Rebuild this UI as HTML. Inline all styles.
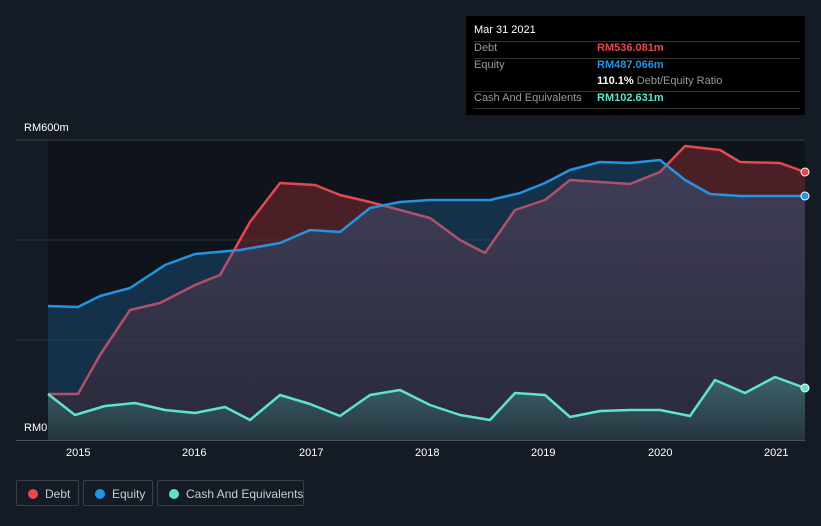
<!DOCTYPE html><html><head><style>
body{margin:0;background:#151b25;width:821px;height:526px;overflow:hidden;font-family:"Liberation Sans",sans-serif;position:relative}
.t{position:absolute;color:#fff;font-size:11px}
.tip{position:absolute;left:466px;top:16px;width:339px;height:99px;background:#000;}
.tip div{position:absolute;font-size:11px;white-space:nowrap}
.ln{position:absolute;left:8px;width:326px;height:1px;background:#333}
.leg{position:absolute;top:480px;height:26px;border:1px solid #3a3f4a;border-radius:2px;color:#c8ccd2;font-size:12px;line-height:26px;box-sizing:border-box;white-space:nowrap}
.leg i{position:absolute;left:11px;top:8px;width:10px;height:10px;border-radius:50%}
</style></head><body>
<svg width="821" height="526" style="position:absolute;left:0;top:0">
<defs>
<clipPath id="aboveDebt"><path d="M48,0 L48,394 L78,394 L100,355 L130,310 L160,303 L195,285 L220,275 L250,222 L280,183 L315,185 L340,195 L370,202 L400,210 L430,218 L460,240 L485,253 L515,210 L545,200 L570,180 L600,182 L630,184 L660,172 L685,146 L720,150 L740,162 L780,163 L805,172 L805,0Z"/></clipPath>
<clipPath id="aboveEq"><path d="M40,0 L48,306 L78,307 L100,296 L130,288 L165,265 L195,254 L240,250 L280,243 L310,230 L340,232 L370,208 L400,202 L430,200 L490,200 L520,193 L545,183 L570,170 L600,162 L630,163 L660,160 L685,180 L710,194 L740,196 L810,196 L810,0Z"/></clipPath>
<clipPath id="belowEq"><path d="M40,440 L40,306 L48,306 L78,307 L100,296 L130,288 L165,265 L195,254 L240,250 L280,243 L310,230 L340,232 L370,208 L400,202 L430,200 L490,200 L520,193 L545,183 L570,170 L600,162 L630,163 L660,160 L685,180 L710,194 L740,196 L810,196 L810,440Z"/></clipPath>
<linearGradient id="cg" x1="0" y1="0" x2="0" y2="1"><stop offset="0" stop-color="#3c6468"/><stop offset="1" stop-color="#263540"/></linearGradient>
<linearGradient id="gg" x1="0" y1="0" x2="0" y2="1"><stop offset="0" stop-color="#403f58"/><stop offset="1" stop-color="#2a2a3c"/></linearGradient>
</defs>
<rect x="16" y="140" width="789" height="300" fill="#0f131b"/>
<rect x="16" y="140" width="32" height="300" fill="#151b25"/>
<path clip-path="url(#aboveDebt)" fill="#15314a" d="M48,440 L48,306 L78,307 L100,296 L130,288 L165,265 L195,254 L240,250 L280,243 L310,230 L340,232 L370,208 L400,202 L430,200 L490,200 L520,193 L545,183 L570,170 L600,162 L630,163 L660,160 L685,180 L710,194 L740,196 L805,196 L805,440Z"/>
<path clip-path="url(#aboveEq)" fill="#4a1f26" d="M48,440 L48,394 L78,394 L100,355 L130,310 L160,303 L195,285 L220,275 L250,222 L280,183 L315,185 L340,195 L370,202 L400,210 L430,218 L460,240 L485,253 L515,210 L545,200 L570,180 L600,182 L630,184 L660,172 L685,146 L720,150 L740,162 L780,163 L805,172 L805,440Z"/>
<path clip-path="url(#belowEq)" fill="url(#gg)" d="M48,440 L48,394 L78,394 L100,355 L130,310 L160,303 L195,285 L220,275 L250,222 L280,183 L315,185 L340,195 L370,202 L400,210 L430,218 L460,240 L485,253 L515,210 L545,200 L570,180 L600,182 L630,184 L660,172 L685,146 L720,150 L740,162 L780,163 L805,172 L805,440Z"/>
<line x1="16" y1="140" x2="805" y2="140" stroke="#3a3f4a"/>
<line x1="16" y1="240" x2="805" y2="240" stroke="#3a3f4a" opacity=".7"/>
<line x1="16" y1="340" x2="805" y2="340" stroke="#3a3f4a" opacity=".7"/>
<path clip-path="url(#aboveEq)" fill="none" stroke="#e5484d" stroke-width="2.5" stroke-linejoin="round" d="M48,394 L78,394 L100,355 L130,310 L160,303 L195,285 L220,275 L250,222 L280,183 L315,185 L340,195 L370,202 L400,210 L430,218 L460,240 L485,253 L515,210 L545,200 L570,180 L600,182 L630,184 L660,172 L685,146 L720,150 L740,162 L780,163 L805,172"/>
<path clip-path="url(#belowEq)" fill="none" stroke="#b0506a" stroke-width="2.5" stroke-linejoin="round" d="M48,394 L78,394 L100,355 L130,310 L160,303 L195,285 L220,275 L250,222 L280,183 L315,185 L340,195 L370,202 L400,210 L430,218 L460,240 L485,253 L515,210 L545,200 L570,180 L600,182 L630,184 L660,172 L685,146 L720,150 L740,162 L780,163 L805,172"/>
<path fill="none" stroke="#2394e0" stroke-width="2.5" stroke-linejoin="round" d="M48,306 L78,307 L100,296 L130,288 L165,265 L195,254 L240,250 L280,243 L310,230 L340,232 L370,208 L400,202 L430,200 L490,200 L520,193 L545,183 L570,170 L600,162 L630,163 L660,160 L685,180 L710,194 L740,196 L805,196"/>
<path fill="url(#cg)" d="M48,440 L48,394 L75,415 L105,406 L135,403 L165,410 L195,413 L225,407 L250,420 L280,395 L310,404 L340,416 L370,395 L400,390 L430,405 L460,415 L490,420 L515,393 L545,395 L570,417 L600,411 L630,410 L660,410 L690,416 L715,380 L745,393 L775,377 L805,388 L805,440Z"/>
<path fill="none" stroke="#5ee3cf" stroke-width="2.5" stroke-linejoin="round" d="M48,394 L75,415 L105,406 L135,403 L165,410 L195,413 L225,407 L250,420 L280,395 L310,404 L340,416 L370,395 L400,390 L430,405 L460,415 L490,420 L515,393 L545,395 L570,417 L600,411 L630,410 L660,410 L690,416 L715,380 L745,393 L775,377 L805,388"/>
<circle cx="805" cy="172" r="4" fill="#e5484d" stroke="#fff"/>
<circle cx="805" cy="196" r="4" fill="#2394e0" stroke="#fff"/>
<circle cx="805" cy="388" r="4" fill="#5ee3cf" stroke="#fff"/>
<line x1="16" y1="440.5" x2="805" y2="440.5" stroke="#4a4f5a"/>
</svg>
<div class="t" style="left:24px;top:122px">RM600m</div>
<div class="t" style="left:24px;top:422px">RM0</div>
<div class="t" style="left:66px;top:447px">2015</div>
<div class="t" style="left:182px;top:447px">2016</div>
<div class="t" style="left:299px;top:447px">2017</div>
<div class="t" style="left:415px;top:447px">2018</div>
<div class="t" style="left:531px;top:447px">2019</div>
<div class="t" style="left:648px;top:447px">2020</div>
<div class="t" style="left:764px;top:447px">2021</div>
<div class="tip">
<div style="left:8px;top:8px;color:#fff">Mar 31 2021</div>
<div class="ln" style="top:25px"></div>
<div style="left:8px;top:26px;color:#999">Debt</div><div style="left:131px;top:26px;color:#e5484d;font-weight:bold">RM536.081m</div>
<div class="ln" style="top:42px"></div>
<div style="left:8px;top:43px;color:#999">Equity</div><div style="left:131px;top:43px;color:#2394e0;font-weight:bold">RM487.066m</div>
<div style="left:131px;top:59px;color:#fff"><b>110.1%</b> <span style="color:#999">Debt/Equity Ratio</span></div>
<div class="ln" style="top:75px"></div>
<div style="left:8px;top:76px;color:#999">Cash And Equivalents</div><div style="left:131px;top:76px;color:#5ee3cf;font-weight:bold">RM102.631m</div>
<div class="ln" style="top:92px"></div>
</div>
<div class="leg" style="left:16px;width:63px"><i style="background:#e5484d"></i><span style="position:absolute;left:28px">Debt</span></div>
<div class="leg" style="left:83px;width:70px"><i style="background:#2394e0"></i><span style="position:absolute;left:28px">Equity</span></div>
<div class="leg" style="left:157px;width:147px"><i style="background:#5ee3cf"></i><span style="position:absolute;left:28px">Cash And Equivalents</span></div>
</body></html>
